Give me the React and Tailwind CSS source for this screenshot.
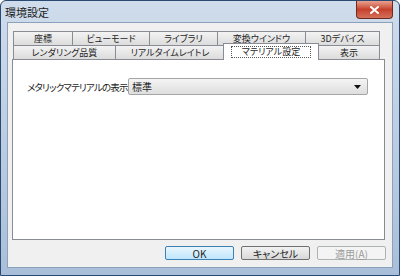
import * as React from 'react'

const FONT = {
  fontFamily: '"Noto Sans CJK JP", "Noto Sans", sans-serif',
}

const ROW1 = [
  { label: '座標', w: 'w-[60px]' },
  { label: 'ビューモード', w: 'w-[78px]' },
  { label: 'ライブラリ', w: 'w-[69px]' },
  { label: '変換ウインドウ', w: 'w-[89px]' },
  { label: '3Dデバイス', w: 'w-[75px]' },
]

const ROW2 = [
  { label: 'レンダリング品質', w: 'w-[103px]' },
  { label: 'リアルタイムレイトレ', w: 'w-[110px]' },
  { label: 'マテリアル設定', w: 'w-[96px]', active: true },
  { label: '表示', w: 'w-[62px]' },
]

export default function App() {
  return (
    <div
      className="flex h-[276px] w-[400px] flex-col overflow-hidden rounded-t-[6px] border border-[#2b4a73] bg-gradient-to-b from-[#cfdceb] via-[#bccde2] to-[#a9bfd9] text-[10px] text-[#1e1e1e] [font-feature-settings:'palt']"
      style={FONT}
    >
      <TitleBar />

      <div className="mx-[6px] mb-[7px] flex flex-1 flex-col border border-[#8aa0bb] bg-[#f0f0f0] px-[4px] pt-[8px]">
        <div className="flex w-[373px] flex-col">
          <div className="flex pl-[1px]">
            {ROW1.map(tab => (
              <Tab key={tab.label} {...tab} />
            ))}
          </div>
          <div className="flex pl-[1px]">
            {ROW2.map(tab => (
              <Tab key={tab.label} {...tab} />
            ))}
          </div>

          <div className="flex h-[181px] items-start border border-[#898c95] bg-white px-[14px] pt-[18px]">
            <span className="mt-[2px] w-[101px] whitespace-nowrap text-[9.5px] leading-[14px] tracking-[-0.8px]">
              メタリックマテリアルの表示
            </span>
            <div className="flex h-[17px] w-[240px] items-center justify-between rounded-[2px] border border-[#a5a5a5] bg-gradient-to-b from-[#f4f4f4] to-[#dedede] pl-[3px] pr-[6px]">
              <span className="leading-[14px]">標準</span>
              <svg width="7" height="4" viewBox="0 0 7 4">
                <path d="M0 0h7L3.5 4z" fill="#111" />
              </svg>
            </div>
          </div>
        </div>

        <div className="mt-[6px] flex w-[374px] justify-end gap-[7px]">
          <Button className="border-[#3c7fb1] bg-gradient-to-b from-[#eaf6fd] to-[#bee6fd]">
            OK
          </Button>
          <Button className="border-[#707070] bg-gradient-to-b from-[#f2f2f2] to-[#d8d8d8]">
            キャンセル
          </Button>
          <Button className="border-[#adb2b5] bg-[#f4f4f4] text-[#9a9a9a]">
            適用(<span className="underline">A</span>)
          </Button>
        </div>
      </div>
    </div>
  )
}

function TitleBar() {
  return (
    <div className="flex h-[21px] shrink-0 items-start justify-between">
      <span className="pl-[4px] pt-[3px] text-[11px] leading-[16px] text-[#1b1b1b]">
        環境設定
      </span>
      <div className="mr-[6px] flex h-[18px] w-[37px] items-center justify-center rounded-b-[4px] border border-t-0 border-[#6d2a22] bg-gradient-to-b from-[#e8a190] via-[#c7402b] to-[#d2705a]">
        <svg width="9" height="8" viewBox="0 0 9 8">
          <path
            d="M1 1l7 6M8 1L1 7"
            stroke="#fff"
            strokeWidth="2"
            strokeLinecap="square"
          />
        </svg>
      </div>
    </div>
  )
}

function Tab({ label, w, active }) {
  if (active) {
    return (
      <div
        className={`relative z-10 -mx-[1px] -mb-[1px] -mt-[2px] flex h-[17px] items-center justify-center whitespace-nowrap border border-b-0 border-[#898c95] bg-white text-[9px] ${w}`}
      >
        <span className="border border-dotted border-[#555] px-[10px] leading-[10px]">
          {label}
        </span>
      </div>
    )
  }
  return (
    <div
      className={`-mr-[1px] flex h-[14px] items-center justify-center whitespace-nowrap border border-b-0 border-[#898c95] bg-gradient-to-b from-[#f3f3f3] to-[#dcdcdc] text-[9px] leading-[10px] ${w}`}
    >
      {label}
    </div>
  )
}

function Button({ children, className }) {
  return (
    <div
      className={`flex h-[14px] w-[69px] items-center justify-center whitespace-nowrap rounded-[2px] border leading-[11px] ${className}`}
    >
      {children}
    </div>
  )
}
